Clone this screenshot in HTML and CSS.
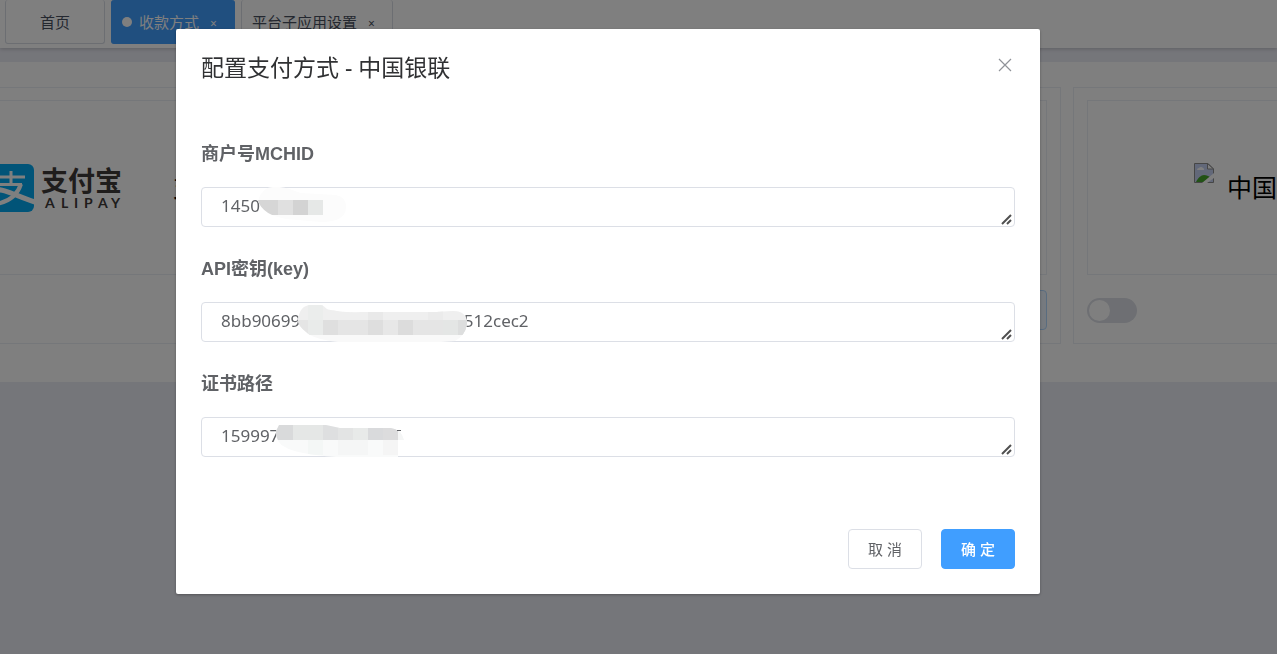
FILE: index.html
```
<!DOCTYPE html>
<html lang="zh-CN">
<head>
    <meta charset="UTF-8">
    <meta name="viewport" content="width=device-width, initial-scale=1.0">
    <title>收款方式</title>
    <link rel="stylesheet" href="styles.css">
</head>
<body>

    <nav class="tabs">
        <a href="#" class="tab tab-home">首页</a>
        <a href="#" class="tab active"><span class="dot"></span>收款方式<span class="tab-close">×</span></a>
        <a href="#" class="tab">平台子应用设置<span class="tab-close">×</span></a>
    </nav>

    <main class="panel">
        <section class="card card-first">
            <div class="card-box">
                <svg class="alipay" width="122" height="48" viewBox="0 0 122 48">
                    <rect x="-14" y="0" width="48" height="48" rx="6" fill="#02a9f1"/>
                    <g fill="none" stroke="#fff">
                        <path d="M-2 13H25M11 7V20M0 20.5H22" stroke-width="3"/>
                        <path d="M21 20C17 32 8 38 -4 40" stroke-width="4"/>
                        <path d="M-6 26C4 24 16 32 35 38" stroke-width="5"/>
                    </g>
                    <text class="logo-cn" x="41" y="27">支付宝</text>
                    <text class="logo-en" x="45 61 74 84 98 111" y="44">ALIPAY</text>
                </svg>
                <span class="pay-name">支付宝</span>
            </div>
            <div class="card-foot"></div>
        </section>
        <section class="card">
            <div class="card-box"></div>
            <div class="card-foot">
                <span></span>
                <button type="button" class="btn btn-plain">配置</button>
            </div>
        </section>
        <section class="card card-last">
            <div class="card-box">
                <svg class="broken" width="20" height="20" viewBox="0 0 20 20">
                    <path d="M.5 .5H14L19.5 6V19.500H.5Z" fill="#c4d0f2" stroke="#8d8d8d"/>
                    <path d="M3 7a2 2 0 0 1 2-2 2.500 2.500 0 0 1 4 0 1.500 1.500 0 0 1 1 2Z" fill="#fff"/>
                    <path d="M2 19C4 15 7 12 10 12S14 13 16 14L11 19Z" fill="#45a52c"/>
                    <path d="M13.500 .5V6H19.500Z" fill="#fff" stroke="#8d8d8d"/>
                    <path d="M20 10L8 20H13L20 15Z" fill="#fff"/>
                </svg>
                <span class="pay-name">中国银联</span>
            </div>
            <div class="card-foot">
                <input type="checkbox" class="switch" aria-label="启用中国银联">
            </div>
        </section>
    </main>

    <div class="overlay">
        <div class="dialog" role="dialog" aria-labelledby="dialog-title">
            <header class="dialog-head">
                <h1 id="dialog-title">配置支付方式 - 中国银联</h1>
                <button type="button" class="close" aria-label="关闭">
                    <svg width="14" height="14" viewBox="0 0 14 14"><path d="M1 1L13 13M13 1L1 13" stroke="#909399" stroke-width="1.200"/></svg>
                </button>
            </header>
            <form class="dialog-body">
                <div class="item">
                    <label for="mchid">商户号MCHID</label>
                    <div class="field">
                        <textarea id="mchid" rows="1">1450</textarea>
                        <svg class="mask" width="280" height="42" viewBox="0 0 280 42">
                            <clipPath id="m1"><path d="M57 14C60 4 66 0 72 0C85 -1 92 4 100 6L135 8Q145 10 145 20Q145 35 120 35L85 32Q62 28 57 14Z"/></clipPath>
                            <g clip-path="url(#m1)">
                                <rect width="280" height="42" fill="#fcfcfc"/>
                                <rect x="57" y="13" width="20" height="15" fill="#d6d6d6"/>
                                <rect x="77" y="13" width="15" height="15" fill="#e0e0e0"/>
                                <rect x="92" y="13" width="15" height="15" fill="#d3d3d3"/>
                                <rect x="107" y="13" width="15" height="15" fill="#e6e8e7"/>
                            </g>
                        </svg>
                        <svg class="grip" width="11" height="11" viewBox="0 0 11 11"><path d="M1 10L10 1M6 10L10 6"/></svg>
                    </div>
                </div>
                <div class="item">
                    <label for="apikey">API密钥(key)</label>
                    <div class="field">
                        <textarea id="apikey" rows="1">8bb90699                                     512cec2</textarea>
                        <svg class="mask" width="280" height="42" viewBox="0 0 280 42">
                            <clipPath id="m2"><path d="M97 18C98 8 103 3 110 3H119C124 3 124 8 130 8Q144 11 160 10H235L252 9Q266 9 266 22Q264 34 254 39L240 40H137Q112 37 105 30Q97 24 97 18Z"/></clipPath>
                            <g clip-path="url(#m2)">
                                <rect width="280" height="42" fill="#f9f9f9"/>
                                <rect x="97" y="0" width="170" height="18" fill="#efefef"/>
                                <rect x="107" y="0" width="15" height="18" fill="#ebedec"/>
                                <rect x="167" y="0" width="15" height="18" fill="#e9e9e9"/>
                                <rect x="227" y="0" width="15" height="18" fill="#ebebeb"/>
                                <rect x="97" y="18" width="170" height="15" fill="#e5e5e5"/>
                                <rect x="107" y="18" width="15" height="15" fill="#e9ebea"/>
                                <rect x="122" y="18" width="15" height="15" fill="#dfdfdf"/>
                                <rect x="167" y="18" width="15" height="15" fill="#dedede"/>
                                <rect x="182" y="18" width="15" height="15" fill="#e7e7e7"/>
                                <rect x="197" y="18" width="15" height="15" fill="#dcdcdc"/>
                                <rect x="242" y="18" width="15" height="15" fill="#e4e6e5"/>
                                <rect x="257" y="18" width="15" height="15" fill="#dddede"/>
                            </g>
                        </svg>
                        <svg class="grip" width="11" height="11" viewBox="0 0 11 11"><path d="M1 10L10 1M6 10L10 6"/></svg>
                    </div>
                </div>
                <div class="item">
                    <label for="cert">证书路径</label>
                    <div class="field">
                        <textarea id="cert" rows="1">159997</textarea>
                        <svg class="mask" width="280" height="42" viewBox="0 0 280 42">
                            <clipPath id="m3"><path d="M75 14L78 8H125L139 11H190Q200 12 203 23H197V40H135Q95 37 84 30Q75 26 75 14Z"/></clipPath>
                            <g clip-path="url(#m3)">
                                <rect width="280" height="42" fill="#f9fafa"/>
                                <rect x="75" y="8" width="17" height="15" fill="#d9dadb"/>
                                <rect x="92" y="8" width="30" height="15" fill="#e5e7e6"/>
                                <rect x="122" y="8" width="15" height="15" fill="#dedfe0"/>
                                <rect x="137" y="8" width="15" height="15" fill="#e3e4e4"/>
                                <rect x="152" y="8" width="15" height="15" fill="#e8eae9"/>
                                <rect x="167" y="8" width="15" height="15" fill="#d9dadc"/>
                                <rect x="182" y="8" width="15" height="15" fill="#dcdcdd"/>
                                <rect x="197" y="8" width="8" height="15" fill="#f5f6f6"/>
                                <rect x="107" y="23" width="15" height="15" fill="#f4f7f6"/>
                                <rect x="137" y="23" width="30" height="15" fill="#f5f6f6"/>
                                <rect x="182" y="23" width="15" height="15" fill="#f5f5f5"/>
                            </g>
                            <path d="M196 13.500H200" stroke="#606266"/>
                        </svg>
                        <svg class="grip" width="11" height="11" viewBox="0 0 11 11"><path d="M1 10L10 1M6 10L10 6"/></svg>
                    </div>
                </div>
            </form>
            <footer class="dialog-foot">
                <button type="button" class="btn">取 消</button>
                <button type="button" class="btn btn-primary">确 定</button>
            </footer>
        </div>
    </div>

</body>
</html>
```
FILE: styles.css
```
* {
    box-sizing: border-box;
}
body {
    margin: 0;
    min-height: 100vh;
    overflow: hidden;
    background: #ebecf5;
    color: #606266;
    font-family: "Noto Sans", "Noto Sans CJK SC", sans-serif;
    font-size: 15px;
}
button, textarea {
    font-family: inherit;
}

/* tabs */
.tabs {
    display: flex;
    gap: 6px;
    height: 48px;
    padding: 0 5px 4px;
    background: #fff;
    box-shadow: 0 1px 4px rgba(0, 0, 0, 0.2);
}
.tab {
    display: flex;
    align-items: center;
    padding: 0 17px 0 10px;
    border: 1px solid #d8dce5;
    border-top: none;
    border-radius: 3px;
    color: #495060;
    text-decoration: none;
    white-space: nowrap;
}
.tab-home {
    padding: 0 34px;
}
.tab.active {
    background: #409eff;
    border-color: #409eff;
    color: #fff;
}
.dot {
    width: 10px;
    height: 10px;
    margin-right: 7px;
    border-radius: 50%;
    background: #fff;
}
.tab-close {
    margin-left: 11px;
    padding-top: 4px;
    font-size: 12px;
}

/* payment cards */
.panel {
    display: grid;
    grid-template-columns: 1fr 1fr 204px;
    gap: 12px;
    margin-top: 14px;
    padding: 25px 0 38px;
    background: #fff;
}
.card {
    padding: 12px 13px 13px;
    border: 1px solid #ebeef5;
}
.card-box {
    display: flex;
    align-items: center;
    height: 175px;
    border: 1px solid #ebeef5;
}
.card-first {
    padding-left: 0;
    border-left: none;
}
.card-first .card-box {
    gap: 51px;
    border-left: none;
}
.card-last {
    padding-right: 0;
    border-right: none;
    overflow: hidden;
}
.card-last .card-box {
    gap: 13px;
    padding-left: 106px;
    border-right: none;
}
.card-foot {
    display: flex;
    align-items: center;
    justify-content: space-between;
    height: 40px;
    margin-top: 15px;
}
.pay-name {
    padding-bottom: 4px;
    color: #000;
    font-size: 25px;
    white-space: nowrap;
}
.alipay, .broken {
    flex: none;
}
.broken {
    margin-bottom: 30px;
}
.logo-cn {
    fill: #3e3a39;
    font-size: 27px;
    font-weight: bold;
}
.logo-en {
    fill: #3e3a39;
    font-family: Lato, sans-serif;
    font-size: 14px;
    font-weight: bold;
}
.switch {
    appearance: none;
    width: 50px;
    height: 25px;
    margin: 0;
    padding: 2px;
    border-radius: 13px;
    background: #dcdfe6;
}
.switch::before {
    content: "";
    display: block;
    width: 21px;
    height: 21px;
    border-radius: 50%;
    background: #fff;
}

/* dialog */
.overlay {
    position: fixed;
    inset: 0;
    padding: 29px 61px 29px 0;
    background: rgba(0, 0, 0, 0.5);
}
.dialog {
    width: 90%;
    max-width: 864px;
    margin: 0 auto;
    padding: 24px 25px 25px;
    border-radius: 2px;
    background: #fff;
    box-shadow: 0 1px 3px rgba(0, 0, 0, 0.3);
}
.dialog-head {
    display: flex;
    justify-content: space-between;
}
.dialog-head h1 {
    margin: 0;
    color: #303133;
    font-size: 23px;
    font-weight: normal;
    line-height: 28px;
}
.close {
    height: 24px;
    padding: 0 3px;
    border: none;
    background: none;
    cursor: pointer;
}
.close svg {
    display: block;
}
.dialog-body {
    padding: 53px 0 72px;
}
.item + .item {
    margin-top: 22px;
}
.item label {
    display: block;
    margin-bottom: 13px;
    font-family: "Liberation Sans", "Noto Sans CJK SC", sans-serif;
    font-size: 18px;
    font-weight: bold;
    line-height: 40px;
}
.field {
    position: relative;
}
.field textarea {
    display: block;
    width: 100%;
    height: 40px;
    padding: 5px 19px;
    border: 1px solid #dcdfe6;
    border-radius: 4px;
    color: #606266;
    font-size: 17px;
    line-height: 26px;
    overflow: hidden;
    resize: vertical;
}
.field textarea::-webkit-resizer {
    background: transparent;
}
.mask {
    position: absolute;
    top: 0;
    left: 0;
    pointer-events: none;
}
.grip {
    position: absolute;
    right: 3px;
    bottom: 2px;
    stroke: #505050;
    stroke-width: 2;
    pointer-events: none;
}
.dialog-foot {
    display: flex;
    justify-content: flex-end;
    gap: 19px;
}
.btn {
    min-width: 74px;
    height: 40px;
    padding: 0 18px 2px;
    border: 1px solid #dcdfe6;
    border-radius: 4px;
    background: #fff;
    color: #606266;
    font-size: 15px;
    cursor: pointer;
}
.btn-primary {
    border-color: #409eff;
    background: #409eff;
    color: #fff;
    font-weight: 500;
}
.btn-plain {
    border-color: #b3d8ff;
    background: #ecf5ff;
    color: #409eff;
}
```
